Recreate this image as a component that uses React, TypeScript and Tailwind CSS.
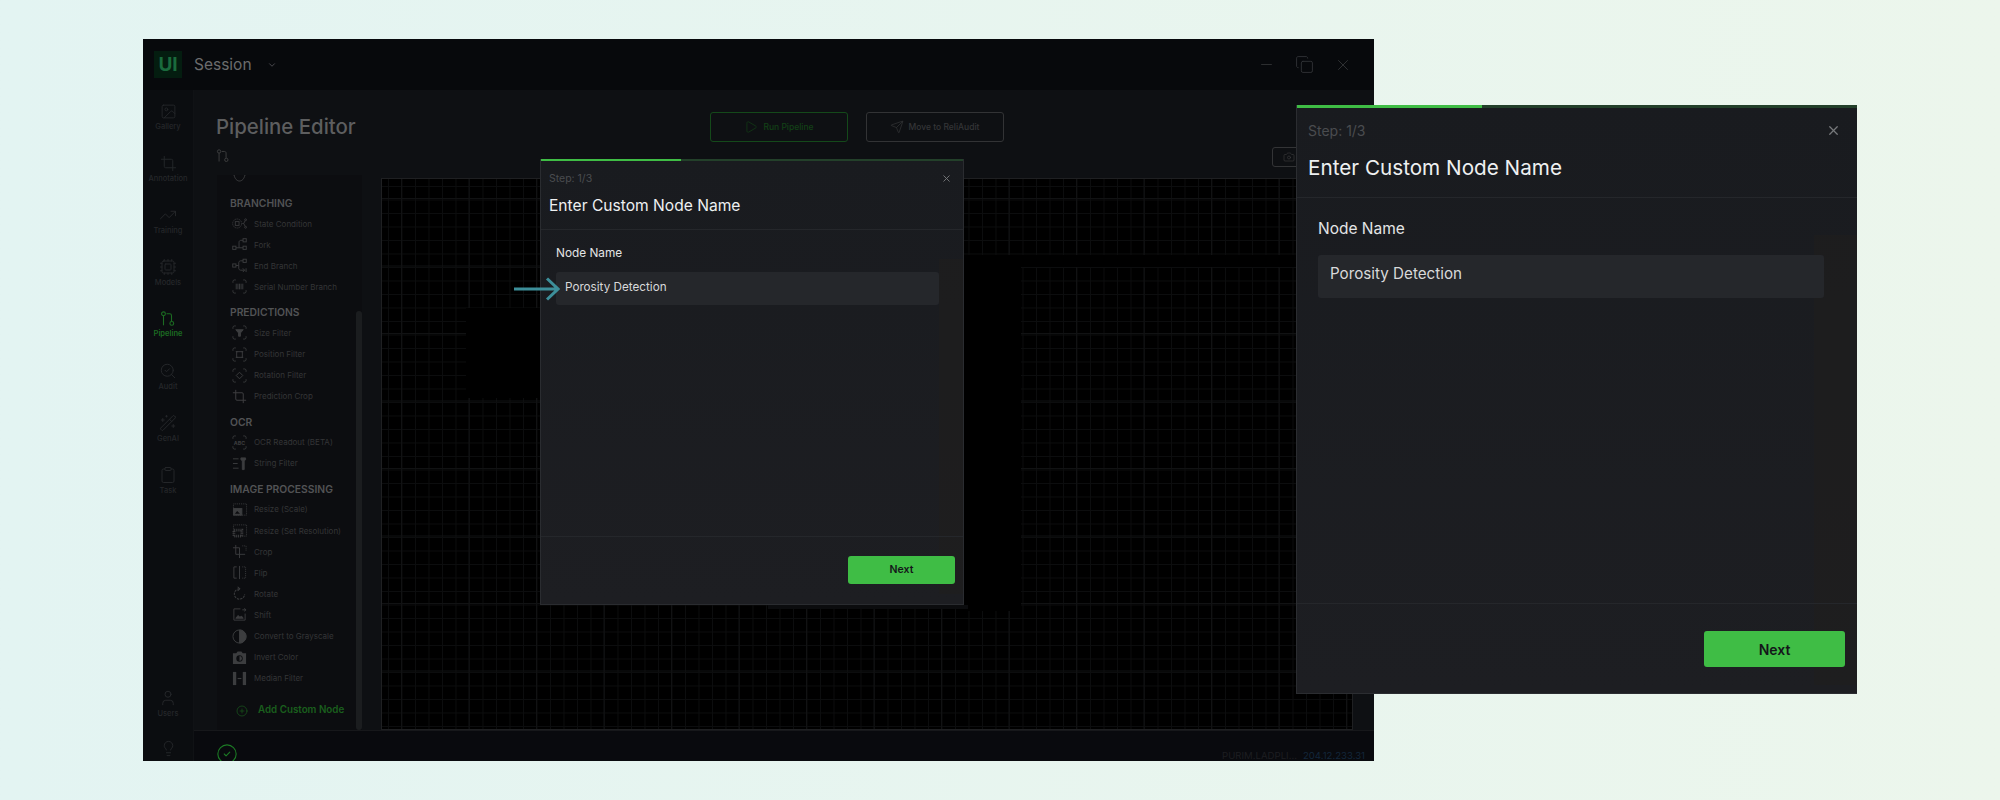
import React from 'react'
import {
    Camera,
    ChevronDown,
    CircleCheck,
    CirclePlus,
    Clipboard,
    Copy,
    Cpu,
    Crop,
    Image,
    Lightbulb,
    Minus,
    Play,
    SearchCheck,
    Send,
    TrendingUp,
    User,
    WandSparkles,
    X,
} from 'lucide-react'

const FONT = "font-['Inter','Noto_Sans',sans-serif]"

function PipelineGlyph({ className }: { className?: string }) {
    return (
        <svg viewBox="0 0 16 16" fill="none" stroke="currentColor" strokeWidth="1.1" className={className}>
            <circle cx="3.5" cy="2.8" r="1.9" />
            <path d="M3.5 4.7v9.6" />
            <path d="M6.5 2.8h3.200c1 0 1.800.8 1.800 1.800v5.500" />
            <circle cx="11.8" cy="12.4" r="1.9" />
        </svg>
    )
}

function Frame({ children }: { children?: React.ReactNode }) {
    return (
        <svg viewBox="0 0 16 16" fill="none" stroke="currentColor" strokeWidth="1" className="w-[15px] h-[15px]">
            <path d="M1 4V2.5C1 1.7 1.7 1 2.5 1H4M12 1h1.5c.8 0 1.5.7 1.5 1.5V4M15 12v1.500c0 .8-.7 1.500-1.500 1.500H12M4 15H2.500C1.700 15 1 14.300 1 13.500V12" />
            {children}
        </svg>
    )
}

const nodeIcons: Record<string, React.ReactNode> = {
    state: (
        <svg viewBox="0 0 16 16" fill="none" stroke="currentColor" strokeWidth="0.9" className="w-[15px] h-[15px]">
            <circle cx="5.500" cy="8" r="4.800" strokeDasharray="1.400 0.800" />
            <rect x="3.500" y="6" width="4" height="4" />
            <path d="M11 8h1.500M12.500 8l1.500-3M12.500 8l1.500 3" />
            <circle cx="14.500" cy="4" r="1" />
            <circle cx="14.500" cy="12" r="1" />
        </svg>
    ),
    fork: (
        <svg viewBox="0 0 16 16" fill="none" stroke="currentColor" strokeWidth="1" className="w-[15px] h-[15px]">
            <rect x="0.800" y="9.800" width="3.400" height="3.400" />
            <rect x="11.800" y="1.800" width="3.400" height="3.400" />
            <rect x="11.800" y="9.800" width="3.400" height="3.400" />
            <path d="M4.200 11.500h7.600M7.500 11.500V5.500c0-1 .8-2 2-2h2.300" />
        </svg>
    ),
    end: (
        <svg viewBox="0 0 16 16" fill="none" stroke="currentColor" strokeWidth="1" className="w-[15px] h-[15px]">
            <rect x="0.800" y="6.300" width="3.400" height="3.400" />
            <rect x="11.800" y="1.300" width="3.400" height="3.400" />
            <path d="M4.200 8h3M7.200 8V5c0-1 .8-2 2-2h2.600M7.200 8v3c0 1 .8 2 2 2h4M11.500 11l2 2-2 2M15 11v4" />
        </svg>
    ),
    serial: (
        <Frame>
            <path d="M4.500 5v6M6.300 5v6M8 5v6M9.700 5v6M11.500 5v6" />
        </Frame>
    ),
    size: (
        <Frame>
            <path d="M4 5h8L9 8.500V12H7V8.500z" fill="currentColor" />
        </Frame>
    ),
    position: (
        <Frame>
            <rect x="5" y="5" width="6" height="6" />
            <path d="M4 5h2M10 5h2M4 11h2M10 11h2" />
        </Frame>
    ),
    rotation: (
        <Frame>
            <path d="M8 4.500 11.500 8 8 11.500 4.500 8z" />
        </Frame>
    ),
    crop: <Crop className="w-[15px] h-[15px]" strokeWidth={1.6} />,
    ocr: (
        <Frame>
            <text x="8" y="10.200" textAnchor="middle" fontSize="5.600" fontWeight="700" fill="currentColor" stroke="none" fontFamily="Inter">ABC</text>
        </Frame>
    ),
    string: (
        <svg viewBox="0 0 16 16" fill="none" stroke="currentColor" strokeWidth="1" className="w-[15px] h-[15px]">
            <path d="M1 3h6M1 8h5M1 13h6" />
            <path d="M9.500 2h5v2l-1.500 1v9.500h-2V5L9.500 4z" fill="currentColor" />
        </svg>
    ),
    resizeScale: (
        <svg viewBox="0 0 16 16" fill="none" stroke="currentColor" strokeWidth="1" className="w-[16px] h-[15px]">
            <path d="M1 2h14v12H1z" strokeDasharray="1 1" />
            <rect x="1" y="7" width="9" height="7" fill="currentColor" />
            <path d="M2.500 12.500 5 9.500l3 3z" fill="#0c0d10" stroke="none" />
        </svg>
    ),
    resizeSet: (
        <svg viewBox="0 0 16 16" fill="none" stroke="currentColor" strokeWidth="1" className="w-[16px] h-[15px]">
            <path d="M1 2h14v12H1z" strokeDasharray="1 1" />
            <rect x="1.500" y="7.500" width="8.500" height="6.500" strokeDasharray="1 1" strokeWidth="3" />
        </svg>
    ),
    cropDash: (
        <svg viewBox="0 0 16 16" fill="none" stroke="currentColor" strokeWidth="1" className="w-[15px] h-[15px]">
            <path d="M4 1v10h10M1 4h7v7" />
            <path d="M11 2h4v5" strokeDasharray="1 1" />
            <path d="M8 11v4" />
        </svg>
    ),
    flip: (
        <svg viewBox="0 0 16 16" fill="none" stroke="currentColor" strokeWidth="1" className="w-[15px] h-[15px]">
            <path d="M5 2H2v12h3M8 1v14" />
            <path d="M11 2h3.500v12H11" strokeDasharray="1 1" />
        </svg>
    ),
    rotate: (
        <svg viewBox="0 0 16 16" fill="none" stroke="currentColor" strokeWidth="1.100" className="w-[15px] h-[15px]">
            <path d="M8 3a5.500 5.500 0 1 0 5.500 5.500" strokeDasharray="2.500 1" />
            <path d="M6 0.800 8.300 3 6 5.200" />
        </svg>
    ),
    shift: (
        <svg viewBox="0 0 16 16" fill="none" stroke="currentColor" strokeWidth="1" className="w-[15px] h-[15px]">
            <path d="M9 2H2v12h12V7" />
            <path d="M11 3h4M13 1.500 15 3l-2 1.500" />
            <path d="M4 12l2.500-3 2 2 1.500-1.500 2 2.500z" fill="currentColor" />
        </svg>
    ),
    gray: (
        <svg viewBox="0 0 16 16" fill="none" stroke="currentColor" strokeWidth="1" className="w-[15px] h-[15px]">
            <circle cx="8" cy="8" r="7" />
            <path d="M8 1a7 7 0 0 1 0 14z" fill="currentColor" />
        </svg>
    ),
    invert: (
        <svg viewBox="0 0 16 16" className="w-[15px] h-[15px]">
            <path d="M1 3.500h3.500L6 1.500h4l1.500 2H15V15H1z" fill="currentColor" />
            <circle cx="8" cy="9" r="3.400" fill="#0c0d10" />
            <path d="M8 6.400a2.600 2.600 0 0 1 0 5.200z" fill="currentColor" />
        </svg>
    ),
    median: (
        <svg viewBox="0 0 16 16" className="w-[15px] h-[15px]">
            <rect x="1" y="1" width="3.500" height="14" fill="currentColor" />
            <rect x="11.500" y="1" width="3.500" height="14" fill="currentColor" />
            <path d="M6 8h4" stroke="currentColor" strokeWidth="1.200" />
        </svg>
    ),
}

const sections = [
    {
        title: 'BRANCHING',
        items: [
            ['state', 'State Condition'],
            ['fork', 'Fork'],
            ['end', 'End Branch'],
            ['serial', 'Serial Number Branch'],
        ],
    },
    {
        title: 'PREDICTIONS',
        items: [
            ['size', 'Size Filter'],
            ['position', 'Position Filter'],
            ['rotation', 'Rotation Filter'],
            ['crop', 'Prediction Crop'],
        ],
    },
    {
        title: 'OCR',
        items: [
            ['ocr', 'OCR Readout (BETA)'],
            ['string', 'String Filter'],
        ],
    },
    {
        title: 'IMAGE PROCESSING',
        items: [
            ['resizeScale', 'Resize (Scale)'],
            ['resizeSet', 'Resize (Set Resolution)'],
            ['cropDash', 'Crop'],
            ['flip', 'Flip'],
            ['rotate', 'Rotate'],
            ['shift', 'Shift'],
            ['gray', 'Convert to Grayscale'],
            ['invert', 'Invert Color'],
            ['median', 'Median Filter'],
        ],
    },
]

const railItems = [
    { label: 'Gallery', icon: <Image className="w-[17px] h-[17px]" strokeWidth={1.3} /> },
    { label: 'Annotation', icon: <Crop className="w-[17px] h-[17px]" strokeWidth={1.3} /> },
    { label: 'Training', icon: <TrendingUp className="w-[18px] h-[18px]" strokeWidth={1.3} /> },
    { label: 'Models', icon: <Cpu className="w-[18px] h-[18px]" strokeWidth={1.3} /> },
    { label: 'Pipeline', icon: <PipelineGlyph className="w-[16px] h-[16px]" />, active: true },
    { label: 'Audit', icon: <SearchCheck className="w-[18px] h-[18px]" strokeWidth={1.3} /> },
    { label: 'GenAI', icon: <WandSparkles className="w-[18px] h-[18px]" strokeWidth={1.3} /> },
    { label: 'Task', icon: <Clipboard className="w-[18px] h-[18px]" strokeWidth={1.3} /> },
]

function RailItem({ label, icon, active }: { label: string; icon: React.ReactNode; active?: boolean }) {
    return (
        <div className={`h-[52px] flex flex-col items-center justify-center gap-[2px] ${active ? 'text-[#1c6b22]' : 'text-[#25272a]'}`}>
            {icon}
            <span className={`text-[7.5px] leading-[10px] ${active ? 'font-semibold' : 'font-medium'}`}>{label}</span>
        </div>
    )
}

function NodePanel() {
    return (
        <div className="relative w-[145px] ml-[23px] h-full bg-[#0c0d10] overflow-hidden">
            <div className="h-[13px] pl-[15px] text-[#3b3c3e]">
                <svg viewBox="0 0 15 9" fill="none" stroke="currentColor" className="w-[15px] h-[9px]">
                    <path d="M2 0c1 4 3 6 5.500 6S12 4 13 0" />
                </svg>
            </div>
            {sections.map((s) => (
                <div key={s.title}>
                    <div className="h-[25px] pt-[8px] pl-[13px] text-[10.300px] leading-[15px] font-semibold text-[#525355]">{s.title}</div>
                    {s.items.map(([icon, label]) => (
                        <div key={label} className="h-[21.100px] flex items-center pl-[15px] text-[#3c3d3f]">
                            <span className="w-[22px] flex shrink-0">{nodeIcons[icon]}</span>
                            <span className="text-[8px] text-[#343537] whitespace-nowrap">{label}</span>
                        </div>
                    ))}
                </div>
            ))}
            <div className="mt-[12px] h-[20px] flex items-center pl-[19px] text-[#1a5f1d]">
                <CirclePlus className="w-[12px] h-[12px]" strokeWidth={1.3} />
                <span className="ml-[10px] text-[9.800px] font-semibold whitespace-nowrap">Add Custom Node</span>
            </div>
            <div className="absolute right-0 top-[136px] bottom-0 w-[6px] rounded-[3px] bg-[#1b1d1f]" />
        </div>
    )
}

function Canvas() {
    return (
        <div className="relative flex-1 ml-[19px] mr-[21px] mt-[3px] border border-[#1f2022] bg-[#000000] bg-[linear-gradient(#111213_1px,transparent_1px),linear-gradient(90deg,#111213_1px,transparent_1px),linear-gradient(#0c0d0e_1px,transparent_1px),linear-gradient(90deg,#0c0d0e_1px,transparent_1px)] bg-[size:67.500px_67.500px,67.500px_67.500px,13.500px_13.500px,13.500px_13.500px] bg-[position:7px_19px,19px_7px,0_7px,6px_0]">
            <div className="absolute left-[84px] top-[129px] w-[80px] h-[90px] bg-black" />
            <div className="absolute left-[580px] top-[76px] w-[59px] h-[356px] bg-black" />
            <div className="absolute left-[386px] top-[426px] w-[200px] h-[4px] bg-[#0b0c0e]" />
            <div className="absolute left-[638px] top-[76px] w-[330px] h-[12px] bg-black" />
        </div>
    )
}

function Window() {
    return (
        <div className="w-[1231px] h-[722px] shrink-0 flex flex-col bg-[#0e1013] overflow-hidden">
            <div className="h-[51px] shrink-0 flex items-center bg-[#07090c] pl-[11px] pr-[22px]">
                <div className="w-[28px] h-[27px] flex items-center justify-center bg-[#041d10] text-[#1a6b3d] text-[19px] font-bold leading-none">UI</div>
                <span className="ml-[12px] text-[15.500px] text-[#6b6c6d]">Session</span>
                <ChevronDown className="ml-[15px] w-[10px] h-[10px] text-[#55565a]" />
                <div className="ml-auto flex items-center gap-[20px] text-[#333538]">
                    <Minus className="w-[17px] h-[17px]" strokeWidth={1.200} />
                    <Copy className="w-[19px] h-[19px]" strokeWidth={1.100} />
                    <X className="w-[18px] h-[18px]" strokeWidth={1.200} />
                </div>
            </div>
            <div className="flex-1 flex min-h-0">
                <div className="w-[51px] shrink-0 flex flex-col border-r border-[#101215] bg-[#0b0d10] pt-[1px]">
                    {railItems.map((r) => (
                        <RailItem key={r.label} {...r} />
                    ))}
                    <div className="mt-auto text-[#25272a]">
                        <RailItem label="Users" icon={<User className="w-[18px] h-[18px]" strokeWidth={1.300} />} />
                        <div className="h-[31px] pt-[10px] flex justify-center">
                            <Lightbulb className="w-[17px] h-[17px]" strokeWidth={1.300} />
                        </div>
                    </div>
                </div>
                <div className="flex-1 min-w-0 flex flex-col">
                    <div className="h-[85px] shrink-0 relative pl-[22px]">
                        <div className="pt-[24px] text-[20.400px] leading-[26px] font-medium text-[#5d5e5f]">Pipeline Editor</div>
                        <PipelineGlyph className="mt-[9px] w-[14px] h-[14px] text-[#3d3e40]" />
                        <div className="absolute left-[516px] top-[22px] flex gap-[18px]">
                            <div className="w-[138px] h-[30px] flex items-center justify-center gap-[5px] rounded-[3px] border border-[#14491a] text-[#124016] text-[8.500px] font-medium">
                                <Play className="w-[14px] h-[14px]" strokeWidth={1.200} />
                                Run Pipeline
                            </div>
                            <div className="w-[138px] h-[30px] flex items-center justify-center gap-[4px] rounded-[3px] border border-[#323335] text-[#343537] text-[8.500px] font-medium">
                                <Send className="w-[14px] h-[14px]" strokeWidth={1.200} />
                                Move to ReliAudit
                            </div>
                        </div>
                        <div className="absolute left-[1078px] top-[57px] w-[60px] h-[20px] flex items-center pl-[10px] rounded-[3px] border border-[#333436] text-[#3a3b3d]">
                            <Camera className="w-[12px] h-[12px]" strokeWidth={1.300} />
                        </div>
                    </div>
                    <div className="flex-1 min-h-0 flex">
                        <NodePanel />
                        <Canvas />
                    </div>
                    <div className="h-[31px] shrink-0 flex items-center border-t border-[#17181b] bg-[#090a0e] pl-[22px] pr-[9px]">
                        <CircleCheck className="w-[22px] h-[22px] mt-[16px] text-[#1c7a25]" strokeWidth={1.200} />
                        <span className="ml-auto mt-[20px] text-[9.600px] text-[#1d1e21]">PURIM.LADPLI...</span>
                        <span className="ml-[6px] mt-[20px] text-[9.600px] text-[#13273b]">204.12.233.31</span>
                    </div>
                </div>
            </div>
        </div>
    )
}

function Modal({ large }: { large?: boolean }) {
    return (
        <div className={large
            ? 'absolute left-[1296px] top-[105px] w-[561px] h-[589px] flex flex-col border-l border-b border-[#2b2d31] bg-gradient-to-b from-[#191b1f] to-[#1d1e22]'
            : 'absolute left-[540px] top-[159px] w-[424px] h-[446px] flex flex-col border-x border-b border-[#2a2c30] bg-gradient-to-b from-[#191b1f] to-[#1d1e22]'}>
            <div className={large ? 'absolute right-0 top-[130px] w-[43px] h-[450px] bg-[#1f1e1b]/50' : 'absolute right-0 top-[100px] w-[24px] h-[335px] bg-[#1f1e1b]/50'} />
            <div className={large ? 'h-[3px] bg-[#23402a] shrink-0' : 'h-[2px] bg-[#23402a] shrink-0'}>
                <div className={large ? 'h-full w-[185px] bg-[#3fbd45]' : 'h-full w-[140px] bg-[#3fbd45]'} />
            </div>
            <div className={large ? 'relative pl-[11px] pt-[14px] pb-[16px]' : 'relative pl-[8px] pt-[11px] pb-[13px]'}>
                <div className={large ? 'text-[14px] leading-[18px] text-[#4a4c4f]' : 'text-[10.500px] leading-[14px] text-[#4a4c4f]'}>Step: 1/3</div>
                <div className={large ? 'mt-[15px] text-[20.700px] leading-[26px] text-[#eef0f1]' : 'mt-[10px] text-[15.600px] leading-[20px] text-[#eef0f1]'}>Enter Custom Node Name</div>
                <X className={large ? 'absolute right-[16px] top-[15px] w-[15px] h-[15px] text-[#77797c]' : 'absolute right-[11px] top-[12px] w-[11px] h-[11px] text-[#77797c]'} strokeWidth={2} />
            </div>
            <div className={large ? 'flex-1 border-t border-[#25272b] pl-[21px] pt-[21px]' : 'flex-1 border-t border-[#25272b] pl-[15px] pt-[16px]'}>
                <div className={large ? 'text-[15.500px] leading-[20px] text-[#e4e5e6]' : 'text-[11.800px] leading-[14px] text-[#e4e5e6]'}>Node Name</div>
                <div className={large
                    ? 'relative mt-[16px] w-[506px] h-[43px] pl-[12px] pb-[4px] flex items-center rounded-[3px] bg-[#25272b] text-[15.200px] text-[#d8d9da]'
                    : 'relative mt-[12px] w-[383px] h-[33px] pl-[9px] pb-[2px] flex items-center rounded-[3px] bg-[#25272b] text-[11.700px] text-[#d8d9da]'}>
                    Porosity Detection
                </div>
            </div>
            <div className={large ? 'relative h-[90px] shrink-0 flex justify-end border-t border-[#25272b] pt-[27px] pr-[12px]' : 'relative h-[68px] shrink-0 flex justify-end border-t border-[#25272b] pt-[19px] pr-[8px]'}>
                <div className={large
                    ? 'w-[141px] h-[36px] flex items-center justify-center rounded-[3px] bg-[#3fbd45] text-[14px] font-semibold text-[#14161a]'
                    : 'w-[107px] h-[28px] flex items-center justify-center rounded-[3px] bg-[#3fbd45] text-[10.500px] font-semibold text-[#14161a]'}>
                    Next
                </div>
            </div>
        </div>
    )
}

export default function App() {
    return (
        <div className={`relative w-[2000px] h-[800px] overflow-hidden bg-gradient-to-r from-[#e3f4f2] to-[#ecf6ec] pl-[143px] pt-[39px] ${FONT}`}>
            <Window />
            <Modal />
            <svg viewBox="0 0 46 24" fill="none" stroke="#3d8f9a" strokeWidth="3" className="absolute left-[514px] top-[277px] w-[46px] h-[24px]">
                <path d="M0 12h43M33 1.500 44 12 33 22.500" />
            </svg>
            <Modal large />
        </div>
    )
}
